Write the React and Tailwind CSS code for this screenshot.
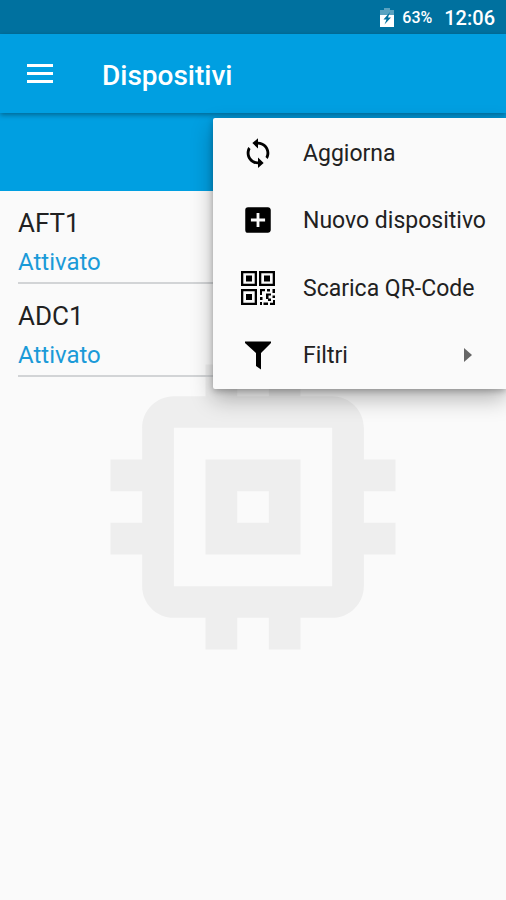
import React from "react";

function BatteryIcon() {
  return (
    <svg viewBox="0 0 14 20" className="h-5 w-3.5" aria-hidden="true">
      <path d="M4 0h6v2h4v5H0V2h4z" fill="#fff" opacity="0.35" />
      <path d="M0 7h14v12H0z" fill="#fff" />
      <path d="M10 4L8 9.500h3L4.500 16.500 6.500 11.500H3.500z" fill="#00719f" />
    </svg>
  );
}

function MenuIcon() {
  return (
    <svg viewBox="0 0 26 20" className="h-5 w-[26px]" fill="currentColor" aria-hidden="true">
      <path d="M0 0h26v3H0zM0 8h26v3H0zM0 16h26v3H0z" />
    </svg>
  );
}

function RefreshIcon() {
  return (
    <svg viewBox="0 0 24 24" className="size-[34px]" aria-hidden="true">
      <path d="M12 4V1.500L8 5l4 3.800V6c3.310 0 6 2.690 6 6 0 1.010-.250 1.970-.700 2.800l1.460 1.460C19.540 15.030 20 13.570 20 12c0-4.420-3.580-8-8-8zm0 14c-3.310 0-6-2.690-6-6 0-1.010.250-1.970.700-2.800L5.240 7.740C4.460 8.970 4 10.430 4 12c0 4.420 3.580 8 8 8v2.500l4-3.500-4-3.800V18z" />
    </svg>
  );
}

function AddBoxIcon() {
  return (
    <svg viewBox="0 0 24 24" className="size-[34px]" aria-hidden="true">
      <path d="M19 3H5a2 2 0 0 0-2 2v14a2 2 0 0 0 2 2h14c1.100 0 2-.900 2-2V5c0-1.100-.900-2-2-2zm-2 10h-4v4h-2v-4H7v-2h4V7h2v4h4v2z" />
    </svg>
  );
}

function QrIcon() {
  return (
    <svg viewBox="0 0 34 34" className="size-[34px]" aria-hidden="true">
      <path
        fillRule="evenodd"
        d="M0 0h16v15H0zM2.300 2.300v10.400h11.400V2.300zM18 0h16v15H18zM20.300 2.300v10.400h11.400V2.300zM0 18h16v16H0zM2.300 20.300v11.400h11.400V20.300z"
      />
      <path d="M5 4.500h6v6H5zM23 4.500h6v6h-6zM5 23h6v6H5z" />
      <path d="M19 18h5v2.300h-3V24h-2zM26 18h3v2.500h-3zM31.500 18H34v4h-2.500zM25 22.500h5v2h-2.500v3H30v2.500h-3v-2h-2zM31.500 24.500H34V27h-2.500zM19 26h2.500v3H19zM19 31h2v3h-2zM22.500 31.500H27V34h-4.500zM32 29h2v5h-5v-2.300h3z" />
    </svg>
  );
}

function FilterIcon() {
  return (
    <svg viewBox="0 0 34 34" className="size-[34px]" aria-hidden="true">
      <path d="M4 3.500h26V5l-10 10v16.500L15 28V15L4 5z" />
    </svg>
  );
}

function ChipIcon() {
  return (
    <svg viewBox="0 0 24 24" className="size-[380px]" fill="#eeeeee" aria-hidden="true">
      <path d="M15 9H9v6h6V9zm-2 4h-2v-2h2v2zm8-2V9h-2V7c0-1.100-.900-2-2-2h-2V3h-2v2h-2V3H9v2H7c-1.100 0-2 .900-2 2v2H3v2h2v2H3v2h2v2c0 1.100.900 2 2 2h2v2h2v-2h2v2h2v-2h2c1.100 0 2-.900 2-2v-2h2v-2h-2v-2h2zm-4 6H7V7h10v10z" />
    </svg>
  );
}

const devices = [
  { name: "AFT1", status: "Attivato" },
  { name: "ADC1", status: "Attivato" },
];

const actions = [
  { label: "Aggiorna", Icon: RefreshIcon },
  { label: "Nuovo dispositivo", Icon: AddBoxIcon },
  { label: "Scarica QR-Code", Icon: QrIcon },
  { label: "Filtri", Icon: FilterIcon, submenu: true },
];

export default function App() {
  return (
    <div className="flex min-h-screen flex-col overflow-hidden bg-[#fafafa] font-[Roboto,sans-serif] text-[#212121]">
      <div className="flex h-[34px] items-center justify-end bg-[#00719f] pt-0.5 pr-[11px] text-white">
        <BatteryIcon />
        <span className="ml-2 text-base font-medium">63%</span>
        <span className="ml-3 text-xl font-medium">12:06</span>
      </div>
      <header className="relative z-10 flex h-[79px] items-center bg-[#009fe1] pl-[27px] text-white shadow-[0_2px_5px_rgba(0,0,0,0.35)]">
        <button type="button" aria-label="Menu">
          <MenuIcon />
        </button>
        <h1 className="ml-[49px] pt-1 text-[28px] font-medium">Dispositivi</h1>
      </header>

      <main className="relative grid flex-1">
        <div className="col-start-1 row-start-1 flex items-center justify-center">
          <ChipIcon />
        </div>
        <section className="relative col-start-1 row-start-1">
          <div className="h-[78px] bg-[#009fe1]" />
          <ul className="pl-[18px]">
            {devices.map((d) => (
              <li key={d.name} className="h-[93px] border-b-2 border-[#d2d4d6] pt-3">
                <p className="text-[26px] leading-10">{d.name}</p>
                <p className="text-2xl leading-[38px] text-[#1b9ad8]">{d.status}</p>
              </li>
            ))}
          </ul>
        </section>

        <div
          role="menu"
          className="absolute top-[5px] right-0 z-20 grid h-[271px] w-[293px] grid-cols-1 grid-rows-4 rounded-l-xs bg-[#fafafa] pt-px shadow-[0_10px_22px_rgba(0,0,0,0.28),0_2px_6px_rgba(0,0,0,0.25)]"
        >
          {actions.map(({ label, Icon, submenu }) => (
            <button
              key={label}
              type="button"
              role="menuitem"
              className="flex items-center pl-7 text-left text-[23px] whitespace-nowrap"
            >
              <Icon />
              <span className="ml-7 flex-1 pt-0.5">{label}</span>
              {submenu && (
                <svg viewBox="0 0 8 14" className="mr-[34px] h-3.5 w-2" fill="#666666" aria-hidden="true">
                  <path d="M0 0l8 7-8 7z" />
                </svg>
              )}
            </button>
          ))}
        </div>
      </main>
    </div>
  );
}
